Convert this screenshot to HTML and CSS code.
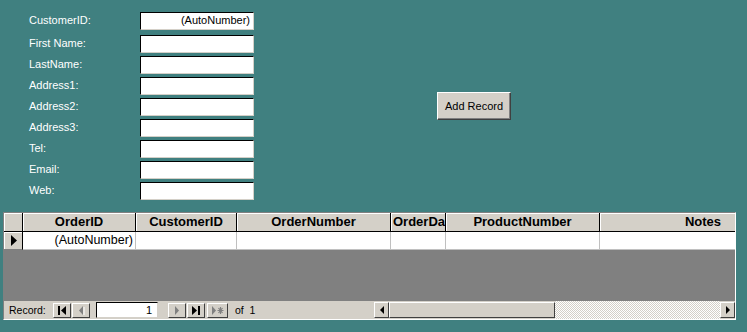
FILE: index.html
```html
<!DOCTYPE html>
<html>
<head>
<meta charset="utf-8">
<title>Customers</title>
<link rel="stylesheet" href="styles.css">
</head>
<body>

<div class="form">
    <div class="fields">
        <label>CustomerID:</label><div class="box auto">(AutoNumber)</div>
        <label>First Name:</label><div class="box"></div>
        <label>LastName:</label><div class="box"></div>
        <label>Address1:</label><div class="box"></div>
        <label>Address2:</label><div class="box"></div>
        <label>Address3:</label><div class="box"></div>
        <label>Tel:</label><div class="box"></div>
        <label>Email:</label><div class="box"></div>
        <label>Web:</label><div class="box"></div>
    </div>
    <button class="btn">Add Record</button>
</div>

<div class="sheet">
    <div class="grid">
        <div class="hd sel"></div>
        <div class="hd">OrderID</div>
        <div class="hd">CustomerID</div>
        <div class="hd">OrderNumber</div>
        <div class="hd left">OrderDa</div>
        <div class="hd">ProductNumber</div>
        <div class="hd right">Notes</div>

        <div class="cell sel"><svg width="8" height="11" viewBox="0 0 8 11"><path d="M1 0 L7 5.5 L1 11 Z" fill="#000"/></svg></div>
        <div class="cell right">(AutoNumber)</div>
        <div class="cell"></div>
        <div class="cell"></div>
        <div class="cell"></div>
        <div class="cell"></div>
        <div class="cell"></div>
    </div>
    <div class="empty"></div>
    <div class="nav">
        <span class="navlbl">Record:</span>
        <span class="nb first"><svg width="10" height="9" viewBox="0 0 10 9"><rect x="1" y="0" width="2" height="9" fill="#000"/><path d="M9 0 L4 4.5 L9 9 Z" fill="#000"/></svg></span>
        <span class="nb"><svg width="10" height="9" viewBox="0 0 10 9"><path d="M7 0 L3 4.5 L7 9 Z" fill="#808080"/><path d="M8 1 L8 10" stroke="#fff"/></svg></span>
        <span class="recno">1</span>
        <span class="nb next"><svg width="10" height="9" viewBox="0 0 10 9"><path d="M3 0 L7 4.5 L3 9 Z" fill="#808080"/></svg></span>
        <span class="nb"><svg width="10" height="9" viewBox="0 0 10 9"><path d="M1 0 L6 4.5 L1 9 Z" fill="#000"/><rect x="7" y="0" width="2" height="9" fill="#000"/></svg></span>
        <span class="nb wide"><svg width="14" height="9" viewBox="0 0 14 9"><path d="M1 0 L5 4.5 L1 9 Z" fill="#808080"/><path d="M9.5 1 L9.5 8 M6.5 4.5 L12.5 4.5 M7.5 2 L11.5 7 M11.5 2 L7.5 7" stroke="#808080" stroke-width="1.2"/></svg></span>
        <span class="navlbl of">of&nbsp; 1</span>
        <div class="hscroll">
            <span class="sb"><svg width="6" height="8" viewBox="0 0 6 8"><path d="M5 0 L1 4 L5 8 Z" fill="#000"/></svg></span>
            <span class="thumb"></span>
            <span class="track"></span>
            <span class="sb"><svg width="6" height="8" viewBox="0 0 6 8"><path d="M1 0 L5 4 L1 8 Z" fill="#000"/></svg></span>
        </div>
    </div>
</div>

</body>
</html>
```

FILE: styles.css
```css
body { margin: 0; background-color: #408080; font-family: "Liberation Sans", Arial, sans-serif; }

.form { display: flex; align-items: flex-start; padding-top: 12px; }
.fields { display: grid; grid-template-columns: 111px 114px; grid-template-rows: 23px; grid-auto-rows: 21px; margin-left: 29px; }
.fields label { color: #fff; font-size: 11px; line-height: 17px; }
.box { height: 18px; box-sizing: border-box; background-color: #fff; border-top: 1px solid #000; border-left: 1px solid #000; border-right: 1px solid #d4d0c8; border-bottom: 1px solid #d4d0c8; font-size: 11px; line-height: 15px; padding: 0 3px; }
.box.auto { text-align: right; }

.btn { margin: 80px 0 0 183px; width: 74px; height: 28px; background-color: #d4d0c8; border: 1px solid; border-color: #fff #404040 #404040 #fff; box-shadow: inset -1px -1px #808080; font-family: "Liberation Sans", Arial, sans-serif; font-size: 11px; color: #000; padding: 0; }

.sheet { margin: 9px 0 0 3px; width: 733px; box-sizing: border-box; border: 1px solid; border-color: #808080 #fff #fff #808080; background-color: #808080; }
.grid { display: grid; grid-template-columns: 19px 113px 101px 154px 55px 154px 135px; }
.hd { height: 18px; background-color: #d4d0c8; border-bottom: 1px solid #000; border-right: 1px solid #000; box-shadow: inset 1px 1px #fff; font-weight: bold; font-size: 13px; line-height: 18px; text-align: center; overflow: hidden; white-space: nowrap; padding: 0 2px; }
.hd:last-child, .hd.right { text-align: right; padding-right: 14px; border-right: none; }
.hd.left { text-align: left; }
.hd.sel { padding: 0; }
.cell { height: 17px; background-color: #fff; border-bottom: 1px solid #c0c0c0; border-right: 1px solid #c0c0c0; font-size: 12.5px; line-height: 17px; padding: 0 2px; white-space: nowrap; overflow: hidden; }
.cell.right { text-align: right; }
.cell.sel { background-color: #d4d0c8; border-right: 1px solid #000; border-bottom: 1px solid #808080; box-shadow: inset 1px 1px #fff; display: flex; align-items: center; padding: 0 0 0 6px; }
.grid .cell:last-child { border-right: none; }

.empty { height: 51px; }

.nav { display: flex; align-items: center; height: 18px; background-color: #d4d0c8; }
.navlbl { font-size: 10.5px; margin-left: 5px; width: 44px; }
.navlbl.of { margin-left: 6px; width: auto; }
.nb { width: 18px; height: 15px; box-sizing: border-box; border: 1px solid; border-color: #fff #404040 #404040 #fff; display: flex; align-items: center; justify-content: center; margin-right: 1px; }
.nb.next { margin-left: 5px; }
.nb.wide { width: 21px; margin-left: 1px; }
.recno { width: 62px; height: 16px; box-sizing: border-box; margin: 0 5px; background-color: #fff; border: 1px solid; border-color: #000 #d4d0c8 #d4d0c8 #000; font-size: 11px; line-height: 14px; text-align: right; padding-right: 5px; }

.hscroll { margin-left: auto; width: 361px; height: 18px; display: flex; }
.sb { width: 15px; height: 16px; box-sizing: border-box; background-color: #d4d0c8; border: 1px solid; border-color: #fff #404040 #404040 #fff; display: flex; align-items: center; justify-content: center; margin-top: 1px; }
.thumb { width: 166px; height: 16px; margin-top: 1px; box-sizing: border-box; background-color: #d4d0c8; border: 1px solid; border-color: #fff #404040 #404040 #fff; }
.track { flex: 1; background-color: #d4d0c8; background-image: conic-gradient(#fff 25%, transparent 0 50%, #fff 0 75%, transparent 0); background-size: 2px 2px; }
```
